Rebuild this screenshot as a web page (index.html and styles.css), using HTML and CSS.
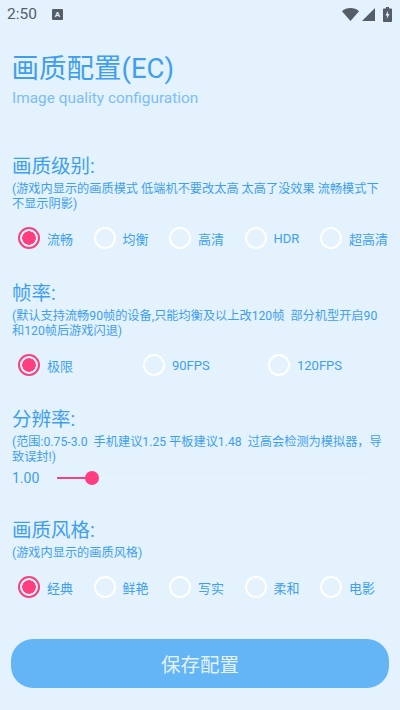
FILE: index.html
```html
<!DOCTYPE html>
<html lang="zh-CN">
<head>
    <meta charset="UTF-8">
    <meta name="viewport" content="width=device-width, initial-scale=1.0">
    <title>画质配置</title>
    <link rel="stylesheet" href="styles.css">
</head>
<body>
    <div class="status-bar">
        <span class="time">2:50</span>
        <span class="notice-icon">A</span>
        <span class="status-icons">
            <svg width="17" height="13" viewBox="0 0 17 13"><path d="M0 3.2C2.200 1.200 5.200 0 8.500 0s6.300 1.200 8.500 3.200L8.500 13z" fill="#555e66"/></svg>
            <svg width="13" height="13" viewBox="0 0 13 13"><path d="M13 0v13H0z" fill="#555e66"/></svg>
            <svg class="battery" width="9" height="15" viewBox="0 0 9 15"><path d="M3 0h3v1.500h2.200c.5 0 .8.300.8.800v11.900c0 .5-.3.800-.8.800H.8c-.5 0-.8-.3-.8-.8V2.300c0-.5.300-.8.800-.8H3z" fill="#555e66"/><path d="M5 3.500 2.500 8.500h1.700L3.800 12l2.700-5H4.800z" fill="#e3f2fd"/></svg>
        </span>
    </div>

    <header class="page-head">
        <h1>画质配置(EC)</h1>
        <p>Image quality configuration</p>
    </header>

    <section class="group group-quality">
        <h2>画质级别:</h2>
        <p class="hint">(游戏内显示的画质模式 低端机不要改太高 太高了没效果 流畅模式下不显示阴影)</p>
        <div class="options five">
            <label><input type="radio" name="quality" checked>流畅</label>
            <label><input type="radio" name="quality">均衡</label>
            <label><input type="radio" name="quality">高清</label>
            <label><input type="radio" name="quality">HDR</label>
            <label><input type="radio" name="quality">超高清</label>
        </div>
    </section>

    <section class="group group-fps">
        <h2>帧率:</h2>
        <p class="hint">(默认支持流畅90帧的设备,只能均衡及以上改120帧&nbsp; 部分机型开启90和120帧后游戏闪退)</p>
        <div class="options three">
            <label><input type="radio" name="fps" checked>极限</label>
            <label><input type="radio" name="fps">90FPS</label>
            <label><input type="radio" name="fps">120FPS</label>
        </div>
    </section>

    <section class="group group-res">
        <h2>分辨率:</h2>
        <p class="hint">(范围:0.75-3.0&nbsp; 手机建议1.25 平板建议1.48&nbsp; 过高会检测为模拟器，导致误封!)</p>
        <div class="slider-row">
            <span class="value">1.00</span>
            <div class="slider">
                <div class="slider-fill"></div>
                <div class="slider-thumb"></div>
            </div>
        </div>
    </section>

    <section class="group group-style">
        <h2>画质风格:</h2>
        <p class="hint">(游戏内显示的画质风格)</p>
        <div class="options five">
            <label><input type="radio" name="style" checked>经典</label>
            <label><input type="radio" name="style">鲜艳</label>
            <label><input type="radio" name="style">写实</label>
            <label><input type="radio" name="style">柔和</label>
            <label><input type="radio" name="style">电影</label>
        </div>
    </section>

    <button class="save" type="button">保存配置</button>
</body>
</html>
```

FILE: styles.css
```css
* {
    box-sizing: border-box;
}

html, body {
    height: 100%;
}

body {
    margin: 0;
    overflow: hidden;
    background-color: #e3f2fd;
    color: #3f9fee;
    font-family: Roboto, "Noto Sans CJK SC", sans-serif;
}

.status-bar {
    display: flex;
    align-items: center;
    height: 28px;
    padding: 0 7px;
    color: #555e66;
}

.time {
    font-size: 15.500px;
}

.notice-icon {
    width: 11px;
    height: 11px;
    margin-left: 15px;
    border-radius: 1px;
    background-color: #555e66;
    color: #e3f2fd;
    font-size: 8px;
    font-weight: 700;
    line-height: 11px;
    text-align: center;
}

.status-icons {
    display: flex;
    align-items: center;
    gap: 3px;
    margin-left: auto;
    margin-right: 1px;
}

.battery {
    margin-left: 5px;
}

.page-head {
    padding: 24px 12px 0;
}

.page-head h1 {
    margin: 0 0 0 -0.5px;
    font-size: 27.5px;
    font-weight: 400;
    line-height: 34px;
}

.page-head p {
    margin: 3px 0 0;
    color: #7cbdf5;
    font-size: 15.400px;
    line-height: 18px;
}

.group {
    padding: 0 12px;
}

.group-quality {
    margin-top: 47px;
}

.group-fps {
    margin-top: 32px;
}

.group-res {
    margin-top: 31px;
}

.group-style {
    margin-top: 29.500px;
}

h2 {
    margin: 0;
    font-size: 19.500px;
    font-weight: 400;
    line-height: 26px;
}

.hint {
    margin: 2px 0 0;
    font-size: 12.200px;
    line-height: 14.500px;
}

.options {
    display: grid;
    align-items: center;
    margin: 16px -5px 0 6px;
}

.five {
    margin-right: -7.5px;
    grid-template-columns: repeat(5, 1fr);
}

.three {
    grid-template-columns: repeat(3, 1fr);
}

.options label {
    display: flex;
    align-items: center;
    gap: 7px;
    font-size: 13px;
    white-space: nowrap;
}

.options input {
    appearance: none;
    flex: none;
    width: 22px;
    height: 22px;
    margin: 0;
    border: 2.500px solid #fff;
    border-radius: 50%;
}

.options input:checked {
    border-color: #f2457e;
    background: radial-gradient(circle, #ff3d7f 0 6.500px, transparent 7px);
}

.slider-row {
    display: flex;
    align-items: center;
    margin-top: 4px;
}

.value {
    width: 45px;
    font-size: 14px;
    line-height: 20px;
}

.slider {
    position: relative;
    flex: 1;
    height: 1px;
    margin-right: 16px;
    background-color: #ecf6fe;
}

.slider-fill {
    position: absolute;
    top: -0.5px;
    left: 0;
    width: 35px;
    height: 2px;
    background-color: #f2457e;
}

.slider-thumb {
    position: absolute;
    top: -6.500px;
    left: 28px;
    width: 14px;
    height: 14px;
    border-radius: 50%;
    background-color: #ff3d7f;
}

.save {
    display: block;
    width: 378px;
    height: 49px;
    margin: 41px 0 0 11px;
    border: none;
    border-radius: 22px;
    background-color: #64b5f6;
    color: #e3f2fd;
    font-family: inherit;
    font-size: 19.500px;
}
```
